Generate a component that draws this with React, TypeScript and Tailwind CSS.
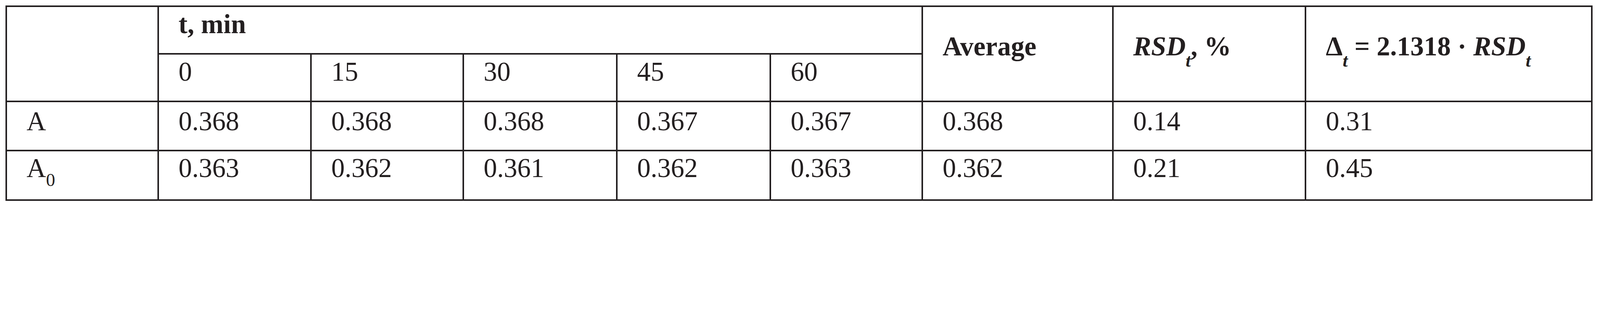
import React from 'react';

const cell = 'border-r-[4px] border-b-[4px] border-[#231f20] align-top pl-[50px] pr-0 text-left whitespace-nowrap';

const times = ['0', '15', '30', '45', '60'];

const rows = [
  { label: 'A', sub: '', pad: 'pt-[12px]', height: 'h-[126px]', values: ['0.368', '0.368', '0.368', '0.367', '0.367', '0.368', '0.14', '0.31'] },
  { label: 'A', sub: '0', pad: 'pt-[6px]', height: 'h-[127px]', values: ['0.363', '0.362', '0.361', '0.362', '0.363', '0.362', '0.21', '0.45'] },
];

const App = () => {
  return (
    <div className="w-full min-h-[533px] bg-white pt-[14px] pl-[14px] font-['Liberation_Serif','Times_New_Roman',serif] text-[#231f20]">
      <table className="table-fixed border-separate border-spacing-0 w-[4063px] border-l-[4px] border-t-[4px] border-[#231f20] text-[69px] leading-[1.1]">
        <colgroup>
          <col className="w-[389px]" />
          <col className="w-[391px]" />
          <col className="w-[390px]" />
          <col className="w-[393px]" />
          <col className="w-[393px]" />
          <col className="w-[389px]" />
          <col className="w-[488px]" />
          <col className="w-[493px]" />
          <col className="w-[733px]" />
        </colgroup>
        <thead>
          <tr className="h-[122px]">
            <th rowSpan={2} className={cell}></th>
            <th colSpan={5} className={`${cell} pt-[7px] font-bold`}>t, min</th>
            <th rowSpan={2} className={`${cell} pt-[64px] font-bold`}>Average</th>
            <th rowSpan={2} className={`${cell} pt-[64px] font-bold`}>
              <span className="italic">RSD</span>
              <sub className="italic text-[47px] -bottom-[29px]">t</sub>, %
            </th>
            <th rowSpan={2} className={`${cell} pt-[64px] font-bold`}>
              Δ<sub className="italic text-[47px] -bottom-[29px]">t</sub> = 2.1318 · <span className="italic">RSD</span>
              <sub className="italic text-[47px] -bottom-[29px]">t</sub>
            </th>
          </tr>
          <tr className="h-[122px]">
            {times.map((t) => (
              <th key={t} className={`${cell} pt-[7px] font-normal`}>{t}</th>
            ))}
          </tr>
        </thead>
        <tbody>
          {rows.map((row, i) => (
            <tr key={i} className={row.height}>
              <td className={`${cell} ${row.pad}`}>
                {row.label}
                {row.sub && <sub className="text-[47px] -bottom-[23px]">{row.sub}</sub>}
              </td>
              {row.values.map((v, j) => (
                <td key={j} className={`${cell} ${row.pad}`}>{v}</td>
              ))}
            </tr>
          ))}
        </tbody>
      </table>
    </div>
  );
};

export default App;
